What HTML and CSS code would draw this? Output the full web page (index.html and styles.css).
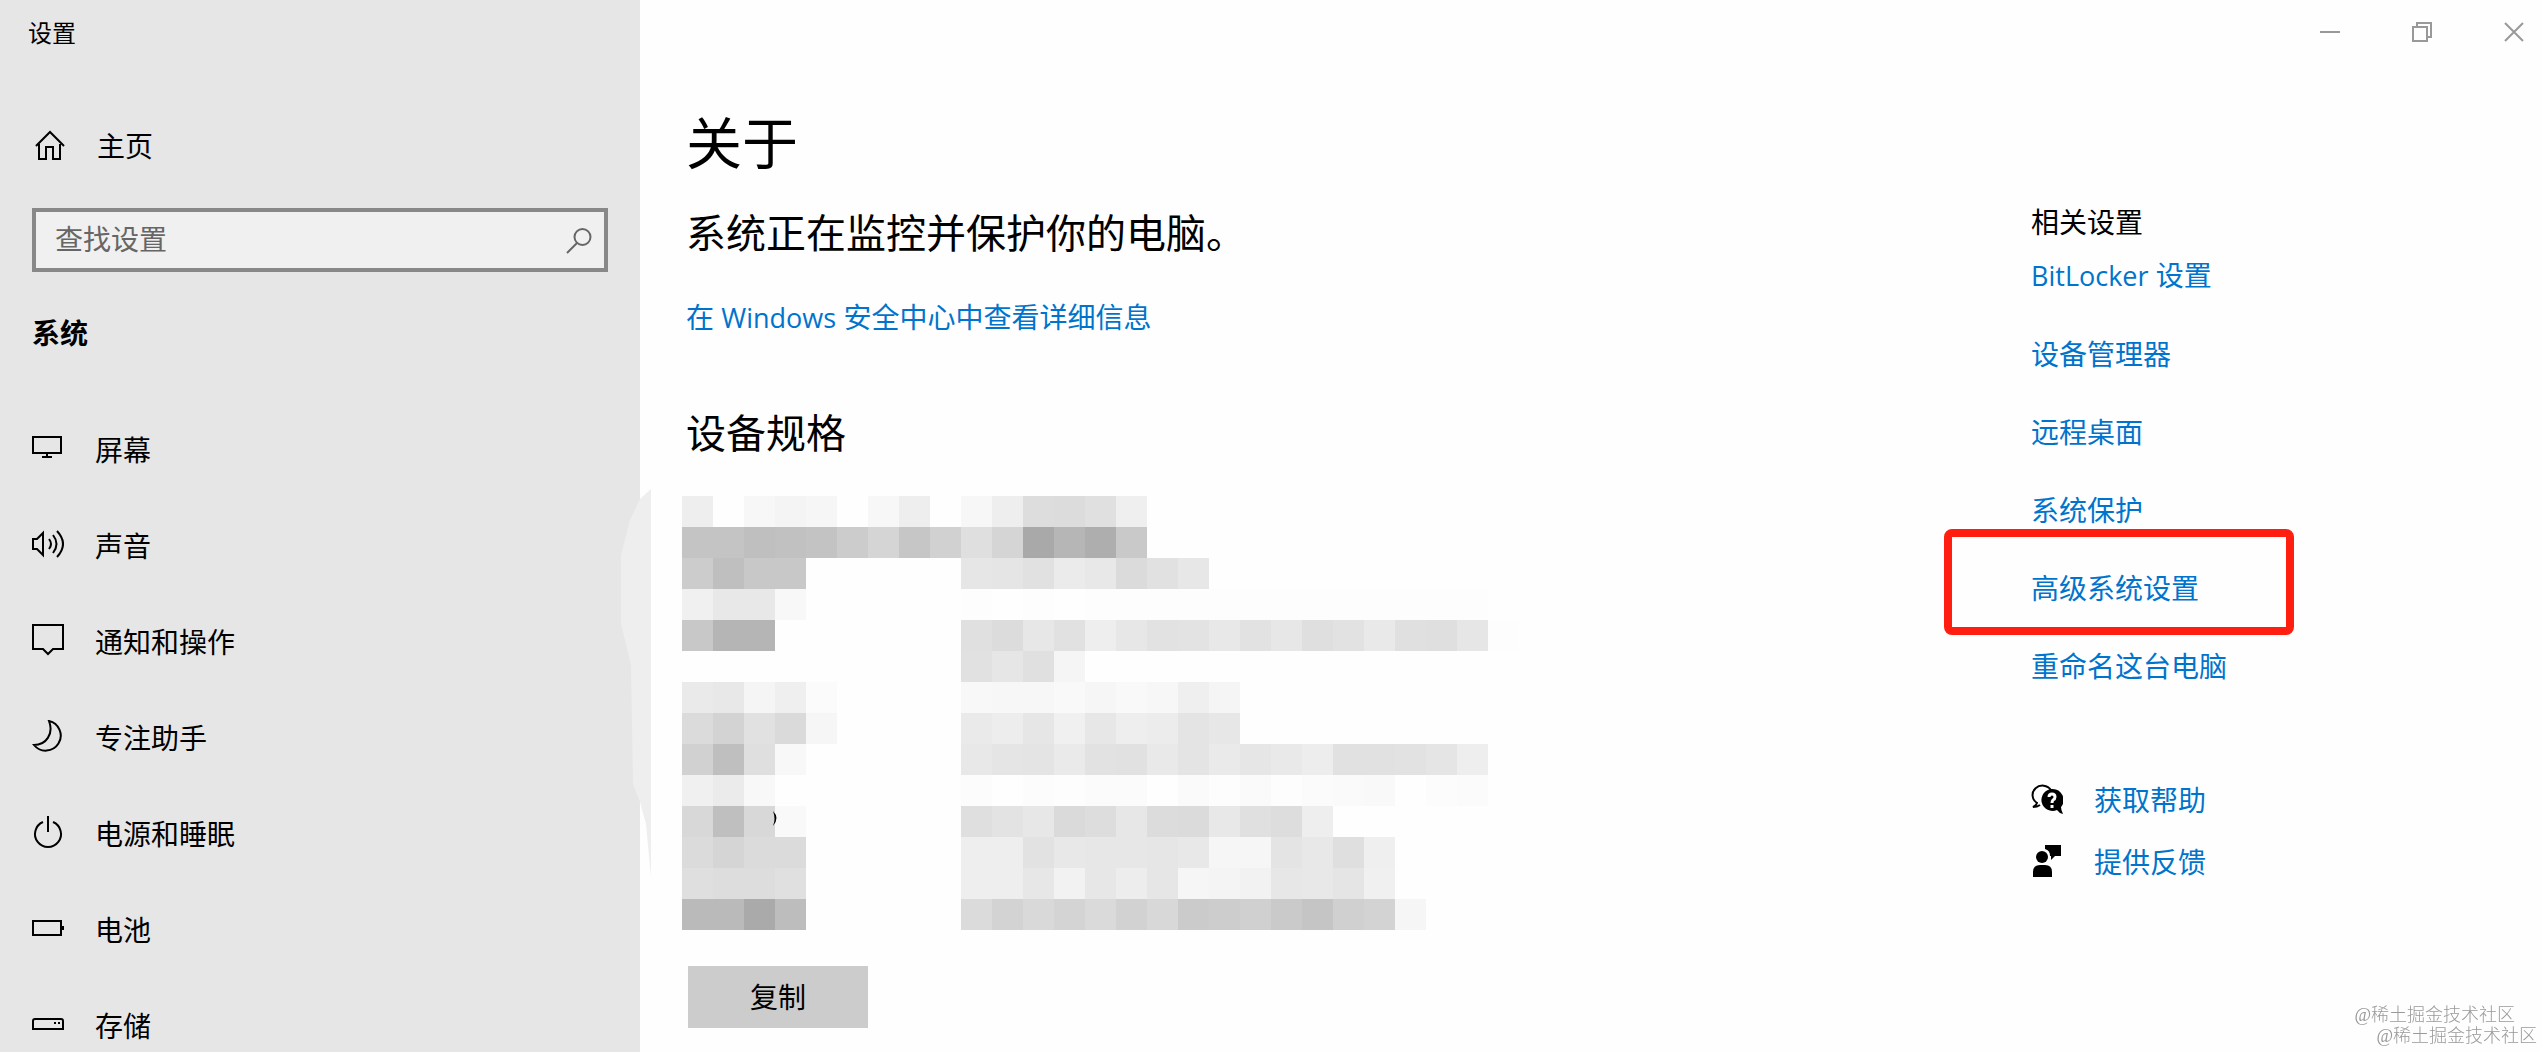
FILE: index.html
```html
<!DOCTYPE html>
<html lang="zh-CN">
<head>
  <meta charset="UTF-8" />
  <title>设置</title>
  <link rel="stylesheet" href="styles.css">
</head>
<body>
  <!-- Sidebar -->
  <aside class="sidebar">
    <div class="app-title">设置</div>
    <a class="home" href="#">
      <svg class="icon" viewBox="0 0 32 32"><path d="M2 17L16 3l14 14M5 15v15h7V18h7v12h7V15"/></svg>
      <span>主页</span>
    </a>
    <div class="search">
      <input type="text" id="search" placeholder="查找设置" aria-label="查找设置">
      <svg class="search-icon" viewBox="0 0 26 26"><circle cx="16.500" cy="9" r="8"/><path d="M11 15L1 25"/></svg>
    </div>
    <h2 class="group">系统</h2>
    <nav class="nav">
      <a href="#">
        <svg class="icon" viewBox="0 0 32 32"><path d="M1 5h28v16H1zM15 21v4M10 25h10"/></svg>
        <span>屏幕</span>
      </a>
      <a href="#">
        <svg class="icon" viewBox="0 0 32 32"><path d="M1 11h4l6-6v22l-6-6H1zM17 11q4 5 0 10M21 7q7 9 0 18M25 3q12 13 0 26"/></svg>
        <span>声音</span>
      </a>
      <a href="#">
        <svg class="icon" viewBox="0 0 32 32"><path d="M1 1h30v24H21l-5 5-5-5H1z"/></svg>
        <span>通知和操作</span>
      </a>
      <a href="#">
        <svg class="icon" viewBox="0 0 32 32"><path d="M17 1A15 15 0 1 1 2 25C14 25 22 14 17 1z"/></svg>
        <span>专注助手</span>
      </a>
      <a href="#">
        <svg class="icon" viewBox="0 0 32 32"><path d="M16 0v16M11 6a13 13 0 1 0 10 0"/></svg>
        <span>电源和睡眠</span>
      </a>
      <a href="#">
        <svg class="icon" viewBox="0 0 32 32"><path d="M1 9h28v14H1zM31 14v4"/></svg>
        <span>电池</span>
      </a>
      <a href="#">
        <svg class="icon" viewBox="0 0 32 32"><path d="M1 21V13q0-2 2-2h26q2 0 2 2v8zM22 15h2M26 15h2"/></svg>
        <span>存储</span>
      </a>
    </nav>
    <svg class="smudge" viewBox="0 0 30 388"><path d="M30 0L19 10 9 31 0 66v69l10 41 2 119 7 18 6 22 5 53z"/></svg>
  </aside>

  <div class="page">
    <!-- Window buttons -->
    <div class="window-bar">
      <button aria-label="最小化"><svg viewBox="0 0 20 20"><path d="M0 10h20"/></svg></button>
      <button aria-label="还原"><svg viewBox="0 0 20 20"><path d="M1 5h14v14H1zM5 5V1h14v14h-4"/></svg></button>
      <button aria-label="关闭"><svg viewBox="0 0 20 20"><path d="M1 1l18 18M19 1L1 19"/></svg></button>
    </div>

    <div class="content">
      <main class="about">
        <h1>关于</h1>
        <p class="status">系统正在监控并保护你的电脑。</p>
        <a class="link" href="#">在 <span class="latin">Windows</span> 安全中心中查看详细信息</a>
        <h2>设备规格</h2>
        <svg class="mosaic" id="mosaic" width="868" height="434" viewBox="0 0 868 434"></svg>
        <button class="copy">复制</button>
      </main>

      <aside class="related">
        <h3>相关设置</h3>
        <div class="links">
          <a class="link" href="#"><span class="latin">BitLocker</span> 设置</a>
          <a class="link" href="#">设备管理器</a>
          <a class="link" href="#">远程桌面</a>
          <a class="link" href="#">系统保护</a>
          <a class="link marked" href="#">高级系统设置</a>
          <a class="link" href="#">重命名这台电脑</a>
        </div>
        <div class="support">
          <a class="link" href="#">
            <svg class="solid" viewBox="0 0 32 32">
              <path class="outline" d="M6 20A10 9.500 0 1 1 20 7M6 19q0 3-4 5 4 0 7-2"/>
              <path d="M21 6a11 11 0 1 0 5 21q2 3 6 4-2-4-2-7A11 11 0 0 0 21 6z"/>
              <path class="question" d="M18 14q0-3 3-3t3 3q0 2-2 3-1 1-1 3M21 22v3"/>
            </svg>
            <span>获取帮助</span>
          </a>
          <a class="link" href="#">
            <svg class="solid" viewBox="0 0 32 32">
              <path d="M14 0h16v11h-6l-4 4v-4h-1A7 7 0 0 0 14 4z"/>
              <circle cx="11" cy="12" r="6"/>
              <path d="M2 32v-5q0-7 7-7h5q7 0 7 7v5z"/>
            </svg>
            <span>提供反馈</span>
          </a>
        </div>
      </aside>
    </div>
  </div>

  <div class="watermark">
    <div>@稀土掘金技术社区</div>
    <div>@稀土掘金技术社区</div>
  </div>

  <script src="mosaic.js"></script>
</body>
</html>
```
FILE: styles.css
```css
* {
  box-sizing: border-box;
}
body {
  margin: 0;
  height: 100vh;
  display: flex;
  overflow: hidden;
  background: #fefefe;
  color: #000;
  font-family: "Open Sans", "Noto Sans CJK SC", sans-serif;
  font-size: 28px;
  line-height: 40px;
}
h1, h2, h3, p {
  margin: 0;
  font-weight: normal;
}
a {
  color: inherit;
  text-decoration: none;
}
button {
  border: 0;
  padding: 0;
  background: none;
  font: inherit;
}
svg {
  display: block;
  flex: none;
}

/* Sidebar */
.sidebar {
  position: relative;
  flex: none;
  width: 640px;
  padding: 13px 32px 0;
  background: #e6e6e6;
}
.app-title {
  margin-left: -4px;
  font-size: 24px;
}
.icon {
  width: 32px;
  height: 32px;
  fill: none;
  stroke: #000;
  stroke-width: 2;
}
.home,
.nav a,
.support a {
  display: flex;
  align-items: center;
  gap: 31px;
}
.home span,
.nav span,
.support span {
  padding-top: 3px;
}
.home {
  margin-top: 70px;
  padding-left: 2px;
}
.search {
  position: relative;
  margin-top: 42px;
}
.search input {
  display: block;
  width: 100%;
  height: 64px;
  padding: 0 64px 2px 19px;
  border: 4px solid #888;
  border-radius: 0;
  background: #f0f0f0;
  font: inherit;
}
.search input::placeholder {
  color: #666;
  opacity: 1;
}
.search-icon {
  position: absolute;
  top: 20px;
  right: 16px;
  width: 26px;
  height: 26px;
  fill: none;
  stroke: #666;
  stroke-width: 2;
}
.group {
  margin: 41px 0 47px;
  font-size: 28px;
  font-weight: bold;
}
.nav a {
  height: 96px;
}
.smudge {
  position: absolute;
  top: 489px;
  right: -11px;
  width: 30px;
  height: 388px;
  fill: #eee;
}

/* Page */
.page {
  flex: 1;
  min-width: 0;
}
.window-bar {
  display: flex;
  justify-content: flex-end;
  gap: 36px;
  height: 64px;
}
.window-bar button {
  display: flex;
  align-items: center;
  justify-content: center;
  width: 56px;
}
.window-bar svg {
  width: 20px;
  height: 20px;
  fill: none;
  stroke: #999;
  stroke-width: 2;
}
.content {
  display: flex;
  justify-content: space-between;
}
.about {
  padding: 42px 0 0 46px;
}
.about h1 {
  font-size: 56px;
  line-height: 72px;
}
.about .status {
  margin-top: 27px;
  font-size: 40px;
  line-height: 56px;
}
.about .link {
  display: block;
  margin-top: 36px;
}
.about h2 {
  margin-top: 67px;
  font-size: 40px;
  line-height: 56px;
}
.link {
  color: #0074cc;
}
.latin {
  font-size: 27px;
}
.mosaic {
  margin: 35px 0 36px -4px;
}
.copy {
  width: 180px;
  height: 62px;
  margin-left: 2px;
  background: #ccc;
}

/* Related settings */
.related {
  flex: none;
  width: 511px;
  padding-top: 138px;
}
.related h3 {
  font-size: 28px;
}
.links {
  display: flex;
  flex-direction: column;
  align-items: flex-start;
  gap: 38px;
  margin-top: 13px;
}
.marked {
  position: relative;
}
.marked::after {
  content: "";
  position: absolute;
  box-sizing: border-box;
  top: -39px;
  left: -87px;
  width: 350px;
  height: 106px;
  border: 8px solid #ff1e10;
  border-radius: 8px;
}
.support {
  display: flex;
  flex-direction: column;
  gap: 19px;
  margin-top: 91px;
}
.solid {
  width: 32px;
  height: 32px;
  fill: #000;
}
.solid .outline {
  fill: none;
  stroke: #000;
  stroke-width: 2;
}
.solid .question {
  fill: none;
  stroke: #fff;
  stroke-width: 3;
}

.watermark {
  position: fixed;
  right: 5px;
  bottom: 5px;
  color: #999;
  font-family: "Liberation Serif", "Noto Sans CJK SC", serif;
  font-size: 18px;
  font-weight: 300;
  line-height: 21px;
}
.watermark div:first-child {
  margin: 0 22px 0 -22px;
}
```
FILE: mosaic.js
```js
// one string per row, two hex digits of grey per cell, ".." leaves a cell empty
const rows = [
  'ee..f7f4f6..f7ee..f7eedddce0ef',
  'c4c4bfc1c3ccd5c6d1dfd5a9b6aec9',
  'ccbfc8c8..........e6e5e1ebe8dbe1e7',
  'f0e8e8f8..........fdfefdfefdfdfdfdfdfdfdfdfdfdfdfdfd',
  'c8b5b5............e0dce7e1eee7e2e3e8e2e7dfe2e9e0dfe6fd',
  '..................e1e6e0f5',
  'eae8f5effb........f8f7f7f9f6f9f7eff5',
  'dbd3e1daf6........eaede6f0e7eeece4e7',
  'd1bfdff8..........e8e5e4eae2e1e9e4eae6e9ede1e1e2e5ee',
  'f0ebf8............fcfefcfdfbfbfefafdfafdfbfaf9fefcfb',
  'd8bfd8f9..........dfe3e7dadde7dcdbe8e0ddee',
  'dbd5dbdb..........eeeee2e8e7e7e6e8f6f6e4e8dfef',
  'dfdddde0..........eeeee7f2e7ede6f6f4f2e7e8e5f0',
  'babaaabd..........dbd3d9d4dad2d8cbcdd0cac5d0d3f6'
];
const size = 31;
let cells = '';
rows.forEach((row, y) => {
  row.match(/../g).forEach((g, x) => {
    if (g === '..') return;
    cells += `<rect x="${x * size}" y="${y * size}" width="${size}" height="${size}" fill="#${g + g + g}"/>`;
  });
});
// leftover bracket between two cells
cells += '<path d="M91 315q7 7 0 15q3-7 0-15z"/>';
document.getElementById('mosaic').innerHTML = cells;
```
